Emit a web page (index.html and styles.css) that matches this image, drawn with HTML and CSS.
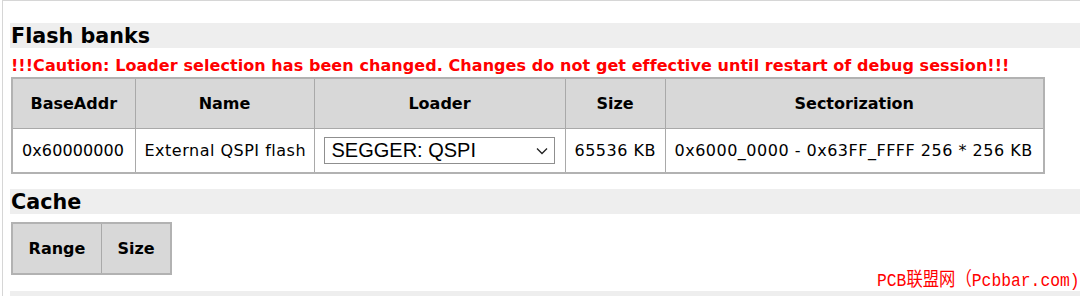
FILE: index.html
```html
<!DOCTYPE html>
<html>
<head>
<meta charset="utf-8">
<link rel="stylesheet" href="styles.css">
</head>
<body>
<div class="frame">
  <h2 class="band">Flash banks</h2>
  <p class="caution">!!!Caution: Loader selection has been changed. Changes do not get effective until restart of debug session!!!</p>
  <table class="grid flash">
    <colgroup>
      <col class="c-base"><col class="c-name"><col class="c-loader"><col class="c-size"><col class="c-sect">
    </colgroup>
    <tr>
      <th>BaseAddr</th><th>Name</th><th>Loader</th><th>Size</th><th>Sectorization</th>
    </tr>
    <tr>
      <td class="addr">0x60000000</td>
      <td>External QSPI flash</td>
      <td class="loader-cell">
        <div class="select-wrap">
          <select class="loader"><option>SEGGER: QSPI</option></select>
          <svg class="chev" width="12" height="8" viewBox="0 0 12 8"><path d="M1 1.5 L6 6.5 L11 1.5" fill="none" stroke="#222" stroke-width="1.3"/></svg>
        </div>
      </td>
      <td>65536 KB</td>
      <td>0x6000_0000 - 0x63FF_FFFF 256 * 256 KB</td>
    </tr>
  </table>
  <h2 class="band band-cache">Cache</h2>
  <table class="grid cache">
    <tr><th class="c-range">Range</th><th class="c-csize">Size</th></tr>
  </table>
  <h2 class="band band-next">Logging</h2>
</div>
<div class="watermark">PCB联盟网（Pcbbar.com)</div>
</body>
</html>
```

FILE: styles.css
```css
html, body {
  margin: 0;
  padding: 0;
  background: #ffffff;
  overflow: hidden;
  height: 296px;
}
body {
  font-family: "DejaVu Sans", Verdana, sans-serif;
  color: #000;
  position: relative;
}
.frame {
  margin-left: 2px;
  border-top: 1px solid #d6d6d6;
  border-left: 1px solid #d6d6d6;
  padding-left: 7px;
  height: 400px;
}
.band {
  margin: 0;
  background: #eeeeee;
  font-size: 20.7px;
  font-weight: bold;
  line-height: 25px;
  height: 24px;
  padding: 1px 0 0 1px;
  overflow: hidden;
}
.frame > .band:first-child {
  margin-top: 22px;
}
.caution {
  margin: 9px 0 2px 1px;
  color: #ff0000;
  font-weight: bold;
  font-size: 16px;
  line-height: 18px;
  letter-spacing: 0.07px;
  white-space: nowrap;
}
.grid {
  border-collapse: collapse;
  margin-left: 1px;
  border: 2px solid #b2b2b2;
}
.grid th, .grid td {
  border: 1px solid #a9a9a9;
  white-space: nowrap;
}
.grid th {
  background: #d8d8d8;
  font-size: 16px;
  font-weight: bold;
  height: 49px;
  padding: 0 14px;
  text-align: center;
}
.grid td {
  font-size: 16px;
  letter-spacing: 0.5px;
  height: 43px;
  padding: 0 9px;
  text-align: left;
}
.grid td.addr {
  letter-spacing: 0.1px;
}
.flash {
  width: 1032px;
  table-layout: fixed;
}
.c-base { width: 123px; }
.c-name { width: 179px; }
.c-loader { width: 251px; }
.c-size { width: 100px; }
.c-sect { width: 379px; }
.loader-cell { padding: 0 9px; }
.select-wrap {
  position: relative;
  width: 231px;
  height: 27px;
}
.loader {
  appearance: none;
  -webkit-appearance: none;
  width: 231px;
  height: 27px;
  margin: 0;
  border: 1px solid #8f8f8f;
  border-radius: 0;
  background: #fff;
  font-family: "Liberation Sans", Arial, sans-serif;
  font-size: 20px;
  letter-spacing: 0;
  color: #000;
  padding: 0 0 0 7px;
  line-height: 25px;
}
.chev {
  position: absolute;
  right: 7px;
  top: 10px;
  pointer-events: none;
}
.band-cache {
  margin-top: 15px;
}
.cache {
  margin-top: 8px;
}
.cache th { padding: 0; }
.c-range { width: 88px; }
.c-csize { width: 68px; }
.band-next {
  margin-top: 16px;
  padding-top: 3px;
}
.watermark {
  position: absolute;
  left: 877px;
  top: 271px;
  color: #ff0000;
  font-family: "Liberation Mono", "Noto Sans CJK SC", monospace;
  font-size: 19px;
  line-height: 20px;
  white-space: nowrap;
  transform: scaleX(0.86);
  transform-origin: left top;
}
```
